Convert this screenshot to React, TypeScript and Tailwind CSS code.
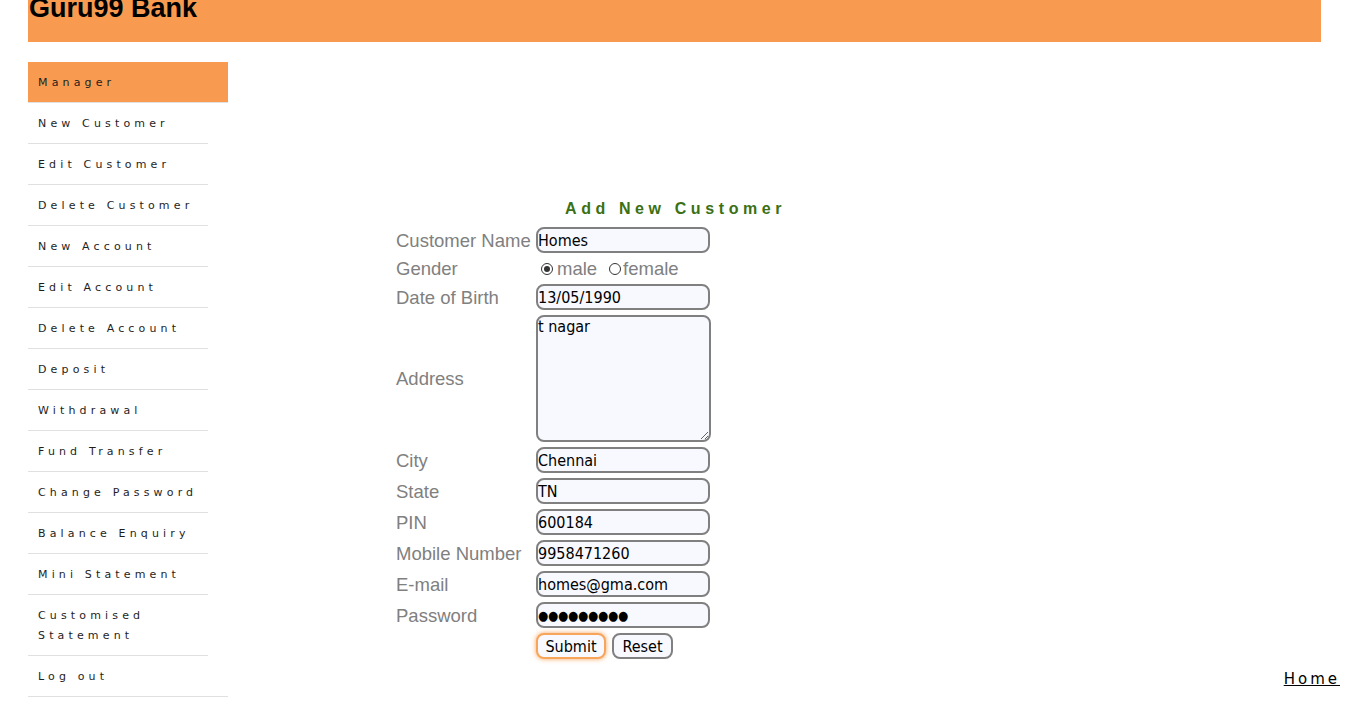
import React from "react";

const items = [
  "New Customer",
  "Edit Customer",
  "Delete Customer",
  "New Account",
  "Edit Account",
  "Delete Account",
  "Deposit",
  "Withdrawal",
  "Fund Transfer",
  "Change Password",
  "Balance Enquiry",
  "Mini Statement",
  "Customised Statement",
];

const inputCls =
  "block w-[174px] h-[26px] rounded-[8px] border-2 border-[#808080] bg-[#f8f8ff] px-0 text-[16px] text-black outline-none font-['DejaVu_Sans_Condensed','DejaVu_Sans',sans-serif]";

function Label({ children }: { children: React.ReactNode }) {
  return (
    <div className="flex items-center text-[18.5px] leading-[21px] text-[#808080] font-['Liberation_Sans',Arial,sans-serif] whitespace-nowrap">
      {children}
    </div>
  );
}

function Radio({ checked }: { checked?: boolean }) {
  return (
    <span className="flex h-[12px] w-[12px] shrink-0 items-center justify-center rounded-full border border-[#333] bg-white">
      {checked && <span className="block h-[6px] w-[6px] rounded-full bg-[#333]" />}
    </span>
  );
}

export default function App() {
  return (
    <div className="w-[1349px] min-h-[724px] bg-white overflow-hidden">
      <div className="mx-[28px] h-[42px] w-[1293px] bg-[#f89b51] overflow-hidden">
        <h2 className="mt-[-5px] ml-[1px] text-[27px] leading-[27px] font-bold text-black font-['Liberation_Sans',Arial,sans-serif]">
          Guru99 Bank
        </h2>
      </div>
      <div className="flex">
        <ul className="ml-[28px] mt-[20px] w-[200px] shrink-0 font-['DejaVu_Sans',sans-serif] text-[11px] leading-[20px] tracking-[4.15px] text-[#1e1e1e]">
          <li className="w-[200px] bg-[#f89b51] pl-[10px] pr-[2px] pt-[11px] pb-[9px] border-b border-[#e0e0e0]">
            Manager
          </li>
          {items.map((t) => (
            <li
              key={t}
              className="w-[180px] pl-[10px] pr-[2px] pt-[11px] pb-[9px] border-b border-[#e0e0e0]"
            >
              {t}
            </li>
          ))}
          <li className="w-[200px] pl-[10px] pr-[2px] pt-[11px] pb-[9px] border-b border-[#e0e0e0]">
            Log out
          </li>
        </ul>
        <div className="flex-1 flex flex-col">
          <div className="mt-[157px] pl-[337px] text-[16px] leading-[20px] font-bold tracking-[4.6px] text-[#3b7014] font-['Liberation_Sans',Arial,sans-serif]">
            Add New Customer
          </div>
          <div className="mt-[8px] ml-[168px] grid grid-cols-[140px_auto] gap-y-[5px] w-max">
            <Label>Customer Name</Label>
            <input className={inputCls} defaultValue="Homes" />
            <Label>Gender</Label>
            <div className="flex items-center h-[21px] text-[18.5px] leading-[21px] text-[#808080] font-['Liberation_Sans',Arial,sans-serif]">
              <span className="ml-[5px]">
                <Radio checked />
              </span>
              <span className="ml-[4px]">male</span>
              <span className="ml-[12px]">
                <Radio />
              </span>
              <span className="ml-[2px]">female</span>
            </div>
            <Label>Date of Birth</Label>
            <input className={inputCls} defaultValue="13/05/1990" />
            <Label>Address</Label>
            <textarea
              className="block w-[175px] h-[127px] rounded-[8px] border-2 border-[#808080] bg-[#f8f8ff] p-0 text-[16px] leading-[19px] text-black outline-none font-['DejaVu_Sans_Condensed','DejaVu_Sans',sans-serif]"
              defaultValue="t nagar"
            />
            <Label>City</Label>
            <input className={inputCls} defaultValue="Chennai" />
            <Label>State</Label>
            <input className={inputCls} defaultValue="TN" />
            <Label>PIN</Label>
            <input className={inputCls} defaultValue="600184" />
            <Label>Mobile Number</Label>
            <input className={inputCls} defaultValue="9958471260" />
            <Label>E-mail</Label>
            <input className={inputCls} defaultValue="homes@gma.com" />
            <Label>Password</Label>
            <input
              className="block w-[174px] h-[26px] rounded-[8px] border-2 border-[#808080] bg-[#f8f8ff] px-0 text-[13px] tracking-[-0.2px] text-black outline-none font-['DejaVu_Sans_Condensed','DejaVu_Sans',sans-serif]"
              defaultValue="●●●●●●●●●"
            />
            <div />
            <div className="flex gap-[6px]">
              <button className="h-[26px] w-[70px] rounded-[8px] border-2 border-[#f8a55c] bg-[#f8f8ff] text-[16px] text-black shadow-[0_0_5px_#f8a55c] font-['DejaVu_Sans_Condensed','DejaVu_Sans',sans-serif]">
                Submit
              </button>
              <button className="h-[26px] w-[61px] rounded-[8px] border-2 border-[#808080] bg-[#f8f8ff] text-[16px] text-black font-['DejaVu_Sans_Condensed','DejaVu_Sans',sans-serif]">
                Reset
              </button>
            </div>
          </div>
          <div className="mt-[11px] flex justify-end pr-[9px]">
            <a className="text-[15px] leading-[18px] tracking-[3px] text-black underline font-['DejaVu_Sans',sans-serif]">
              Home
            </a>
          </div>
        </div>
      </div>
    </div>
  );
}
